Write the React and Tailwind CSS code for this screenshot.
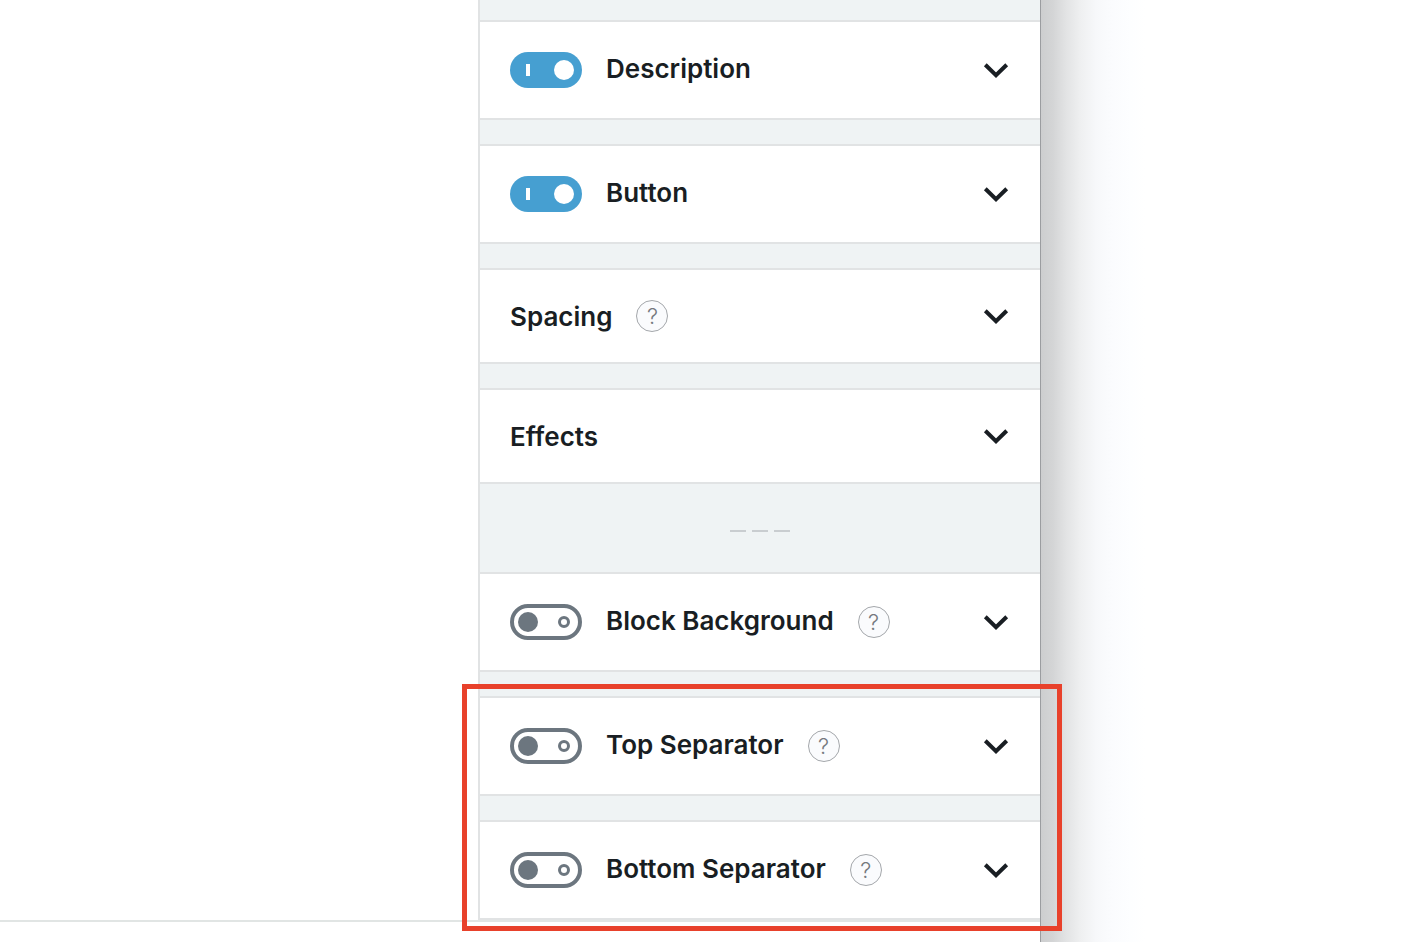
import { useState } from "react";

function Toggle({ id, on, onChange }) {
  return (
    <span className="relative block h-9 w-[72px] shrink-0">
      <input
        id={id}
        type="checkbox"
        checked={on}
        onChange={onChange}
        className="absolute inset-0 h-full w-full cursor-pointer appearance-none rounded-full"
      />
      <svg viewBox="0 0 72 36" className="pointer-events-none relative block h-9 w-[72px]" aria-hidden="true">
        {on ? (
          <>
            <rect width="72" height="36" rx="18" fill="#469fd1" />
            <rect x="16" y="12" width="4" height="12" fill="#fff" />
            <circle cx="54" cy="18" r="10" fill="#fff" />
          </>
        ) : (
          <>
            <rect x="2" y="2" width="68" height="32" rx="16" fill="#fff" stroke="#6c767f" strokeWidth="4" />
            <circle cx="18" cy="18" r="10" fill="#6c767f" />
            <circle cx="54" cy="18" r="4.5" fill="#fff" stroke="#6c767f" strokeWidth="3" />
          </>
        )}
      </svg>
    </span>
  );
}

function Section({ title, toggle, help }) {
  const [on, setOn] = useState(toggle === "on");
  const id = title.toLowerCase().replace(" ", "-");
  return (
    <section
      className={`flex items-center gap-6 border-y-2 border-[#e1e3e4] bg-white pr-8 pl-[30px] ${
        toggle ? "h-[100px]" : "h-24"
      }`}
    >
      {toggle && <Toggle id={id} on={on} onChange={() => setOn(!on)} />}
      {toggle ? (
        <label htmlFor={id} className="pb-[2px] text-[26px] leading-8 font-semibold">
          {title}
        </label>
      ) : (
        <h2 className="pt-[2px] text-[26px] leading-8 font-semibold">{title}</h2>
      )}
      {help && (
        <button
          type="button"
          aria-label={`Help: ${title}`}
          className="flex size-8 items-center justify-center rounded-full border border-[#a4a7ab] bg-[#fafbfd] text-[22px] leading-8 font-light text-[#75797e]"
        >
          ?
        </button>
      )}
      <button type="button" aria-label={`Expand ${title}`} className="ml-auto">
        <svg viewBox="0 0 26 18" className="-mr-px block h-[18px] w-[26px]" fill="none" stroke="#191e23" strokeWidth="4" aria-hidden="true">
          <path d="M2.3 3.8 13 14.2 23.7 3.8" />
        </svg>
      </button>
    </section>
  );
}

export default function App() {
  return (
    <div
      className="grid min-h-screen grid-cols-[minmax(0,1040fr)_minmax(0,382fr)] bg-white text-[#191e23] [font-variant-ligatures:none]"
      style={{ fontFamily: 'Inter, "Liberation Sans", sans-serif' }}
    >
      <main>
        <div className="border-b-2 border-[#e1e5e4]">
          <div className="ml-auto flex w-[562px] flex-col gap-6 border-l-2 border-[#e1e3e4] bg-[#eff3f4] pt-5">
            <Section title="Description" toggle="on" />
            <Section title="Button" toggle="on" />
            <Section title="Spacing" help />
            <div>
              <Section title="Effects" />
              <div className="flex h-[88px] justify-center gap-[6px] pt-[46px]">
                <span className="h-[2px] w-4 bg-[#c9cdd0]" />
                <span className="h-[2px] w-4 bg-[#c9cdd0]" />
                <span className="h-[2px] w-4 bg-[#c9cdd0]" />
              </div>
              <Section title="Block Background" toggle="off" help />
            </div>
            <div className="relative flex flex-col gap-6">
              <Section title="Top Separator" toggle="off" help />
              <Section title="Bottom Separator" toggle="off" help />
              <div className="pointer-events-none absolute -top-3 -right-[22px] -bottom-[11px] -left-[18px] z-10 border-5 border-[#e8412b]" />
            </div>
          </div>
        </div>
      </main>
      <aside className="border-l border-[#9b9da0] bg-[linear-gradient(to_right,#cdcecf_0px,#d4d5d6_12px,#e2e3e4_25px,#eff0f1_40px,#f7f8fa_55px,#fbfcfe_72px,#fdfeff_90px,#ffffff_104px)]" />
    </div>
  );
}
